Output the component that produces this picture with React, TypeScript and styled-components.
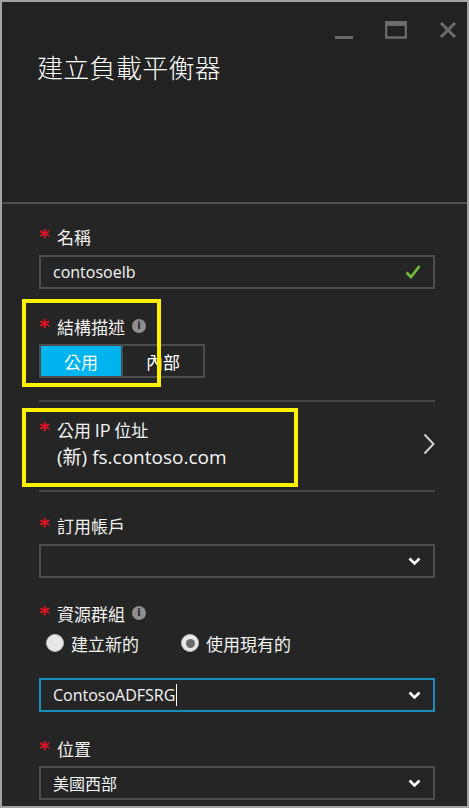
import React from "react";
import styled, { createGlobalStyle } from "styled-components";

const Global = createGlobalStyle`
  html, body { margin: 0; padding: 0; background: #ffffff; }
  body { font-family: "Open Sans", "Noto Sans CJK TC", sans-serif; }
`;

const FONT = `"Open Sans", "Noto Sans CJK TC", sans-serif`;

const Frame = styled.div`
  box-sizing: border-box;
  width: 469px;
  height: 808px;
  border: 2px solid #a3a3a3;
  background: #252525;
  display: flex;
  flex-direction: column;
  overflow: hidden;
  font-family: ${FONT};
  color: #ffffff;
`;

const Header = styled.header`
  box-sizing: border-box;
  height: 202px;
  flex: none;
  background: #222222;
  border-bottom: 2px solid #4e4e4e;
  display: flex;
  flex-direction: column;
`;

const Controls = styled.div`
  display: flex;
  justify-content: flex-end;
  align-items: flex-start;
  gap: 32px;
  padding: 19px 10px 0 0;
  height: 18px;
`;

const Title = styled.h1`
  margin: 12px 0 0 35px;
  font-family: "Noto Sans CJK TC", sans-serif;
  font-weight: 300;
  font-size: 26px;
  line-height: 32px;
  letter-spacing: 0.3px;
  color: #ffffff;
`;

const Body = styled.main`
  flex: 1;
  display: flex;
  flex-direction: column;
  padding: 20px 32px 0 37px;
`;

const Group = styled.section<{ $mt?: number }>`
  position: relative;
  display: flex;
  flex-direction: column;
  margin-top: ${(p) => p.$mt ?? 0}px;
`;

const Label = styled.div`
  display: flex;
  align-items: center;
  height: 24px;
  font-family: "Noto Sans CJK TC", sans-serif;
  font-size: 17px;
  color: #f2f2f2;
`;

const Star = styled.span`
  width: 18px;
  color: #e81123;
  font-family: "DejaVu Sans", sans-serif;
  font-weight: bold;
  font-size: 20px;
  line-height: 24px;
  align-self: flex-start;
  margin-top: 0px;
`;

const InfoDot = styled.span`
  display: inline-flex;
  align-items: center;
  justify-content: center;
  width: 14px;
  height: 14px;
  border-radius: 50%;
  background: #8f8f8f;
  color: #252525;
  font-family: "DejaVu Sans", sans-serif;
  font-weight: bold;
  font-size: 10px;
  line-height: 1;
  margin-left: 7px;
`;

const Box = styled.div<{ $focus?: boolean }>`
  box-sizing: border-box;
  height: 34px;
  width: 396px;
  border: ${(p) => (p.$focus ? "2px solid #1a8dba" : "2px solid #4d4d4d")};
  display: flex;
  align-items: center;
  padding: 0 12px 0 12px;
  font-family: ${FONT};
  font-size: 16px;
  color: #f5f5f5;
`;

const BoxText = styled.span`
  flex: 1;
  display: flex;
  align-items: center;
`;

const Caret = styled.span`
  display: inline-block;
  width: 1px;
  height: 22px;
  background: #ffffff;
  margin-left: 1px;
`;

const Toggle = styled.div`
  display: flex;
  width: 166px;
  height: 34px;
  margin-top: 6px;
`;

const ToggleCell = styled.div<{ $on?: boolean }>`
  box-sizing: border-box;
  flex: 1;
  display: flex;
  align-items: center;
  justify-content: center;
  font-family: "Noto Sans CJK TC", sans-serif;
  font-size: 17px;
  color: #ffffff;
  background: ${(p) => (p.$on ? "#00b4ef" : "transparent")};
  border: 2px solid #4d4d4d;
  border-left-width: ${(p) => (p.$on ? "2px" : "0")};
`;

const Highlight = styled.div<{ $l: number; $t: number; $w: number; $h: number }>`
  position: absolute;
  box-sizing: border-box;
  left: ${(p) => p.$l}px;
  top: ${(p) => p.$t}px;
  width: ${(p) => p.$w}px;
  height: ${(p) => p.$h}px;
  border: 4px solid #fff200;
  pointer-events: none;
`;

const Rule = styled.hr<{ $mt: number }>`
  margin: ${(p) => p.$mt}px 0 0 0;
  width: 396px;
  border: none;
  border-top: 2px solid #464646;
`;

const LinkRow = styled.div`
  display: flex;
  align-items: center;
  justify-content: space-between;
  width: 396px;
`;

const Value = styled.div`
  padding-left: 18px;
  font-family: ${FONT};
  font-size: 19px;
  line-height: 26px;
  margin-top: 3px;
  color: #f5f5f5;
`;

const Radios = styled.div`
  display: flex;
  align-items: center;
  gap: 42px;
  height: 24px;
  margin-top: 6px;
  padding-left: 7px;
`;

const RadioItem = styled.label`
  display: flex;
  align-items: center;
  gap: 7px;
  font-family: "Noto Sans CJK TC", sans-serif;
  font-size: 17px;
  color: #f2f2f2;
`;

const RadioCircle = styled.span<{ $checked?: boolean }>`
  box-sizing: border-box;
  width: 18px;
  height: 18px;
  border-radius: 50%;
  background: #e8e8e8;
  border: 1px solid #bdbdbd;
  display: flex;
  align-items: center;
  justify-content: center;
  &::after {
    content: "";
    display: ${(p) => (p.$checked ? "block" : "none")};
    width: 9px;
    height: 9px;
    border-radius: 50%;
    background: #6a6a6a;
  }
`;

const Minimize = () => (
  <svg width="18" height="18" viewBox="0 0 18 18">
    <rect x="0" y="15" width="18" height="3" fill="#6b6b6b" />
  </svg>
);
const Maximize = () => (
  <svg width="22" height="18" viewBox="0 0 22 18">
    <rect x="1" y="2.5" width="20" height="14" fill="none" stroke="#6b6b6b" strokeWidth="2.5" />
    <rect x="0" y="0" width="22" height="5" fill="#6b6b6b" />
  </svg>
);
const Close = () => (
  <svg width="18" height="18" viewBox="0 0 18 18">
    <path d="M2 2 L16 16 M16 2 L2 16" stroke="#6b6b6b" strokeWidth="3" />
  </svg>
);
const Check = () => (
  <svg width="16" height="16" viewBox="0 0 16 16">
    <path d="M1.5 8.5 L6 13 L14.5 2" fill="none" stroke="#72ba3a" strokeWidth="2.8" />
  </svg>
);
const ChevronDown = () => (
  <svg width="13" height="9" viewBox="0 0 13 9">
    <path d="M1.5 1.5 L6.5 6.5 L11.5 1.5" fill="none" stroke="#ffffff" strokeWidth="2.6" />
  </svg>
);
const ChevronRight = () => (
  <svg width="12" height="22" viewBox="0 0 12 22">
    <path d="M1.5 1.5 L10.5 11 L1.5 20.5" fill="none" stroke="#cfcfcf" strokeWidth="2" />
  </svg>
);

const FieldLabel = ({ text, info }: { text: string; info?: boolean }) => (
  <Label>
    <Star>*</Star>
    {text}
    {info && <InfoDot>i</InfoDot>}
  </Label>
);

export default function App() {
  return (
    <>
      <Global />
      <Frame>
        <Header>
          <Controls>
            <Minimize />
            <Maximize />
            <Close />
          </Controls>
          <Title>建立負載平衡器</Title>
        </Header>
        <Body>
          <Group>
            <FieldLabel text="名稱" />
            <Box style={{ marginTop: 7 }}>
              <BoxText>contosoelb</BoxText>
              <Check />
            </Box>
          </Group>

          <Group $mt={25}>
            <FieldLabel text="結構描述" info />
            <Toggle>
              <ToggleCell $on>公用</ToggleCell>
              <ToggleCell>內部</ToggleCell>
            </Toggle>
            <Highlight $l={-17} $t={-15} $w={139} $h={88} />
          </Group>

          <Rule $mt={22} />

          <Group $mt={15}>
            <LinkRow>
              <div>
                <FieldLabel text="公用 IP 位址" />
                <Value>(新) fs.contoso.com</Value>
              </div>
              <ChevronRight />
            </LinkRow>
            <Highlight $l={-17} $t={-9} $w={276} $h={79} />
          </Group>

          <Rule $mt={20} />

          <Group $mt={21}>
            <FieldLabel text="訂用帳戶" />
            <Box style={{ marginTop: 7 }}>
              <BoxText />
              <ChevronDown />
            </Box>
          </Group>

          <Group $mt={23}>
            <FieldLabel text="資源群組" info />
            <Radios>
              <RadioItem>
                <RadioCircle />
                建立新的
              </RadioItem>
              <RadioItem>
                <RadioCircle $checked />
                使用現有的
              </RadioItem>
            </Radios>
            <Box $focus style={{ marginTop: 23 }}>
              <BoxText>
                ContosoADFSRG
                <Caret />
              </BoxText>
              <ChevronDown />
            </Box>
          </Group>

          <Group $mt={24}>
            <FieldLabel text="位置" />
            <Box style={{ marginTop: 6 }}>
              <BoxText>美國西部</BoxText>
              <ChevronDown />
            </Box>
          </Group>
        </Body>
      </Frame>
    </>
  );
}
